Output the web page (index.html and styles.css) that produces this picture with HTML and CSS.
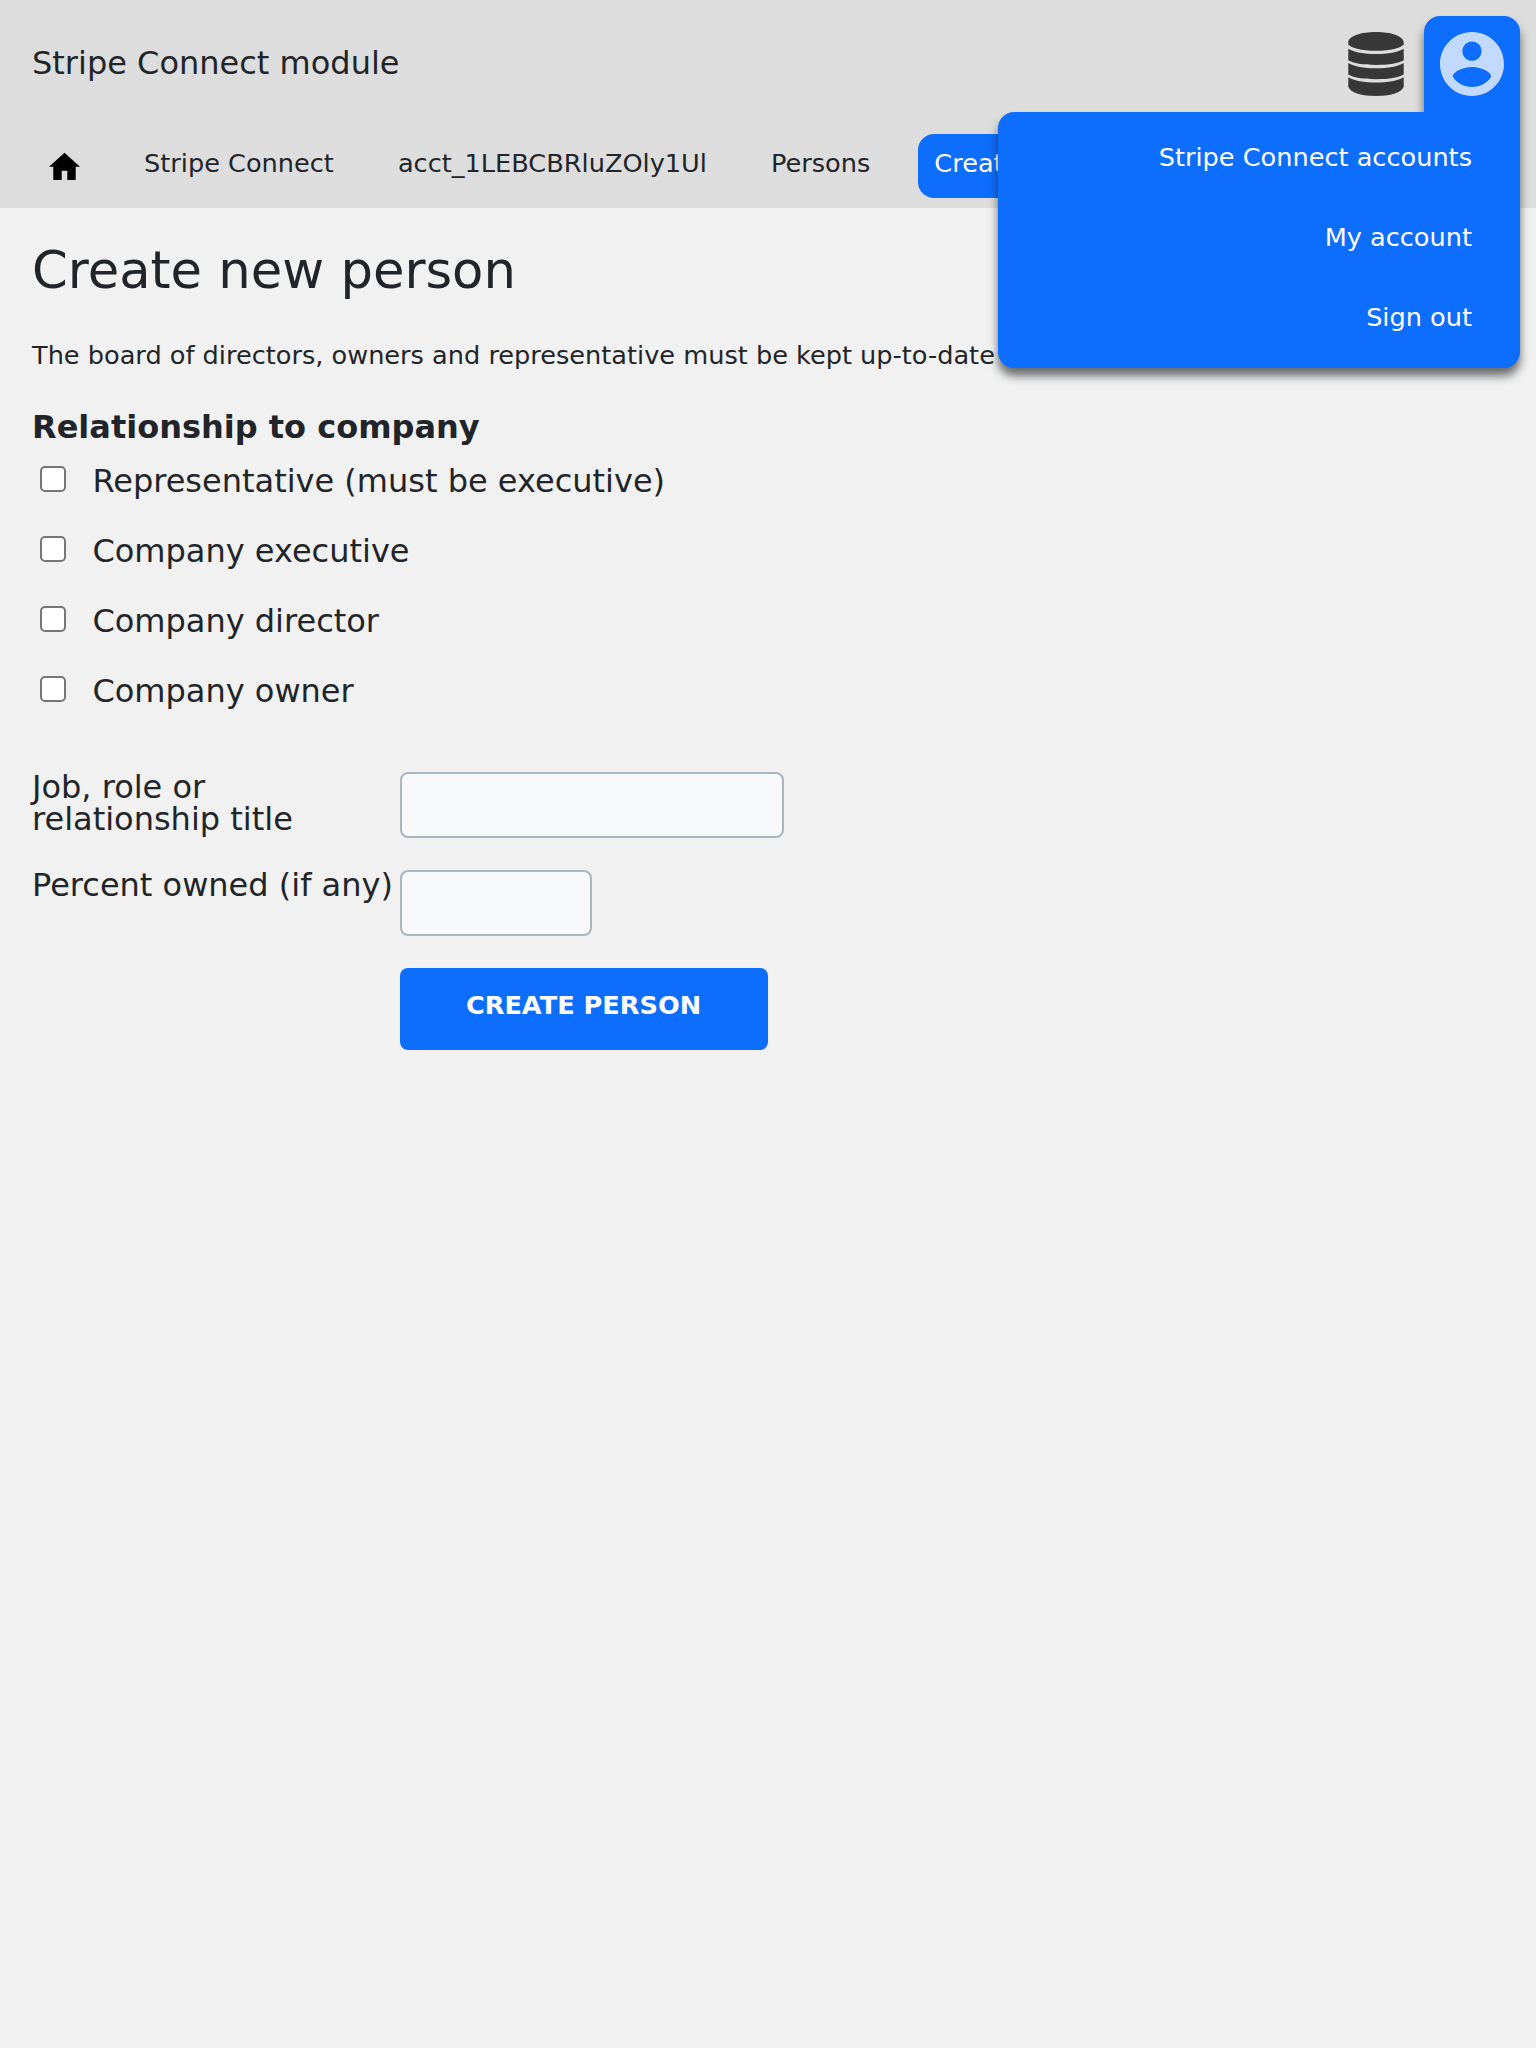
FILE: index.html
```html
<!DOCTYPE html>
<html lang="en">
<head>
<meta charset="utf-8">
<title>Create new person</title>
<link rel="stylesheet" href="styles.css">
</head>
<body>
<header class="header">
  <div class="bar">
    <div class="title">Stripe Connect module</div>
    <div class="tools">
      <svg class="database" viewBox="0 0 56 64"><path d="M.3 10C1 4 13 0 28 0s27 4 27.700 10v2.500C53 16.200 42 18.800 28 18.800S3 16.200.3 12.500zM.3 16.700C6 20.300 16 22 28 22s22-1.700 27.700-5.300v11.600C51 31.300 41 33 28 33S5 31.300.3 28.300zM.3 31C6 34.600 16 36.300 28 36.300S50 34.600 55.700 31v11.600C51 45.600 41 47.300 28 47.300S5 45.600.3 42.600zM.3 45.300C6 48.900 16 50.600 28 50.600s22-1.700 27.700-5.300V55C53 61 42 64 28 64S3 61 .3 55z"/></svg>
      <div class="account">
        <svg class="avatar" viewBox="2 2 20 20"><path d="M12 2C6.480 2 2 6.480 2 12s4.480 10 10 10 10-4.480 10-10S17.520 2 12 2zm0 3c1.660 0 3 1.340 3 3s-1.340 3-3 3-3-1.340-3-3 1.340-3 3-3zm0 14.200c-2.500 0-4.710-1.280-6-3.220.030-1.990 4-3.080 6-3.080 1.990 0 5.970 1.090 6 3.080-1.290 1.940-3.500 3.220-6 3.220z"/></svg>
        <nav class="menu">
          <a>Stripe Connect accounts</a>
          <a>My account</a>
          <a>Sign out</a>
        </nav>
      </div>
    </div>
  </div>
  <nav class="crumbs">
    <a class="home"><svg viewBox="0 0 32 28"><path d="M16.500 .8 32 14.700h-4.300V28h-8.400v-9.300h-5.600V28H5.300V14.700H1z"/></svg></a>
    <a>Stripe Connect</a>
    <a>acct_1LEBCBRluZOly1Ul</a>
    <a>Persons</a>
    <a class="current">Create person</a>
  </nav>
</header>
<main class="content">
  <h1>Create new person</h1>
  <p class="intro">The board of directors, owners and representative must be kept up-to-date</p>
  <form>
    <h3>Relationship to company</h3>
    <ul class="checks">
      <li><span class="box"></span>Representative (must be executive)</li>
      <li><span class="box"></span>Company executive</li>
      <li><span class="box"></span>Company director</li>
      <li><span class="box"></span>Company owner</li>
    </ul>
    <div class="fields">
      <label>Job, role or<br>relationship title</label><input class="wide" type="text">
      <label>Percent owned (if any)</label><input class="short" type="text">
      <button type="button">CREATE PERSON</button>
    </div>
  </form>
</main>
</body>
</html>
```

FILE: styles.css
```css
* { box-sizing: border-box; }
body {
  margin: 0;
  min-height: 2048px;
  background: #f1f1f1;
  color: #212529;
  font: 25.6px/32px "DejaVu Sans", sans-serif;
  overflow: hidden;
}
.header { height: 208px; background: #ddd; }
.bar { display: flex; justify-content: space-between; height: 128px; padding: 16px 16px 0 32px; }
.title { font-size: 32px; line-height: 95px; }
.tools { display: flex; gap: 20px; }
.database { width: 56px; height: 64px; margin-top: 16px; fill: #373737; }
.account {
  position: relative;
  z-index: 2;
  width: 96px;
  height: 112px;
  padding: 16px;
  border-radius: 16px 16px 0 0;
  background: #0d6efd;
  filter: drop-shadow(0 8px 5px rgba(33, 37, 41, .65));
}
.avatar { display: block; width: 64px; height: 64px; fill: #c2daff; }
.menu {
  position: absolute;
  top: 96px;
  right: 0;
  width: 522px;
  height: 256px;
  padding: 5px 48px;
  border-radius: 16px 0 16px 16px;
  background: #0d6efd;
  text-align: right;
}
.menu a { display: block; line-height: 80px; color: #fff; }
.crumbs { display: flex; gap: 32px; height: 80px; padding: 6px 32px; white-space: nowrap; }
.crumbs a { height: 64px; padding: 0 16px; border-radius: 16px; line-height: 59px; }
.crumbs .home { width: 64px; padding-top: 18px; }
.home svg { display: block; width: 32px; height: 28px; }
.crumbs .current { background: #0d6efd; color: #fff; }
.content { padding: 32px; }
h1 { margin: 0; font-size: 51.2px; font-weight: 400; line-height: 61px; }
.intro { margin: 38px 0 0; white-space: nowrap; }
h3 { margin: 37px 0 0; font-size: 32px; line-height: 38px; }
.checks { margin: 16px 0 0; padding: 0; list-style: none; font-size: 32px; }
.checks li { display: flex; height: 70px; padding-left: 8px; line-height: 38px; }
.box { width: 26px; height: 26px; margin: 4px 26.4px 0 0; border: 2px solid #767676; border-radius: 5px; background: #fff; }
.fields {
  display: grid;
  grid-template-columns: 368px 1fr;
  row-gap: 32px;
  margin-top: 30px;
  font-size: 32px;
  line-height: 32px;
}
.fields label { margin-top: -1px; white-space: nowrap; }
.fields input { height: 66px; border: 2px solid #a9b5c1; border-radius: 8px; background: #f8f9fa; }
.wide { width: 384px; }
.short { width: 192px; }
.fields button {
  grid-column: 2;
  width: 368px;
  height: 82px;
  padding: 0 1px 8px 0;
  border: 0;
  border-radius: 8px;
  background: #0d6efd;
  color: #fff;
  font: bold 25.6px "DejaVu Sans", sans-serif;
}
```
